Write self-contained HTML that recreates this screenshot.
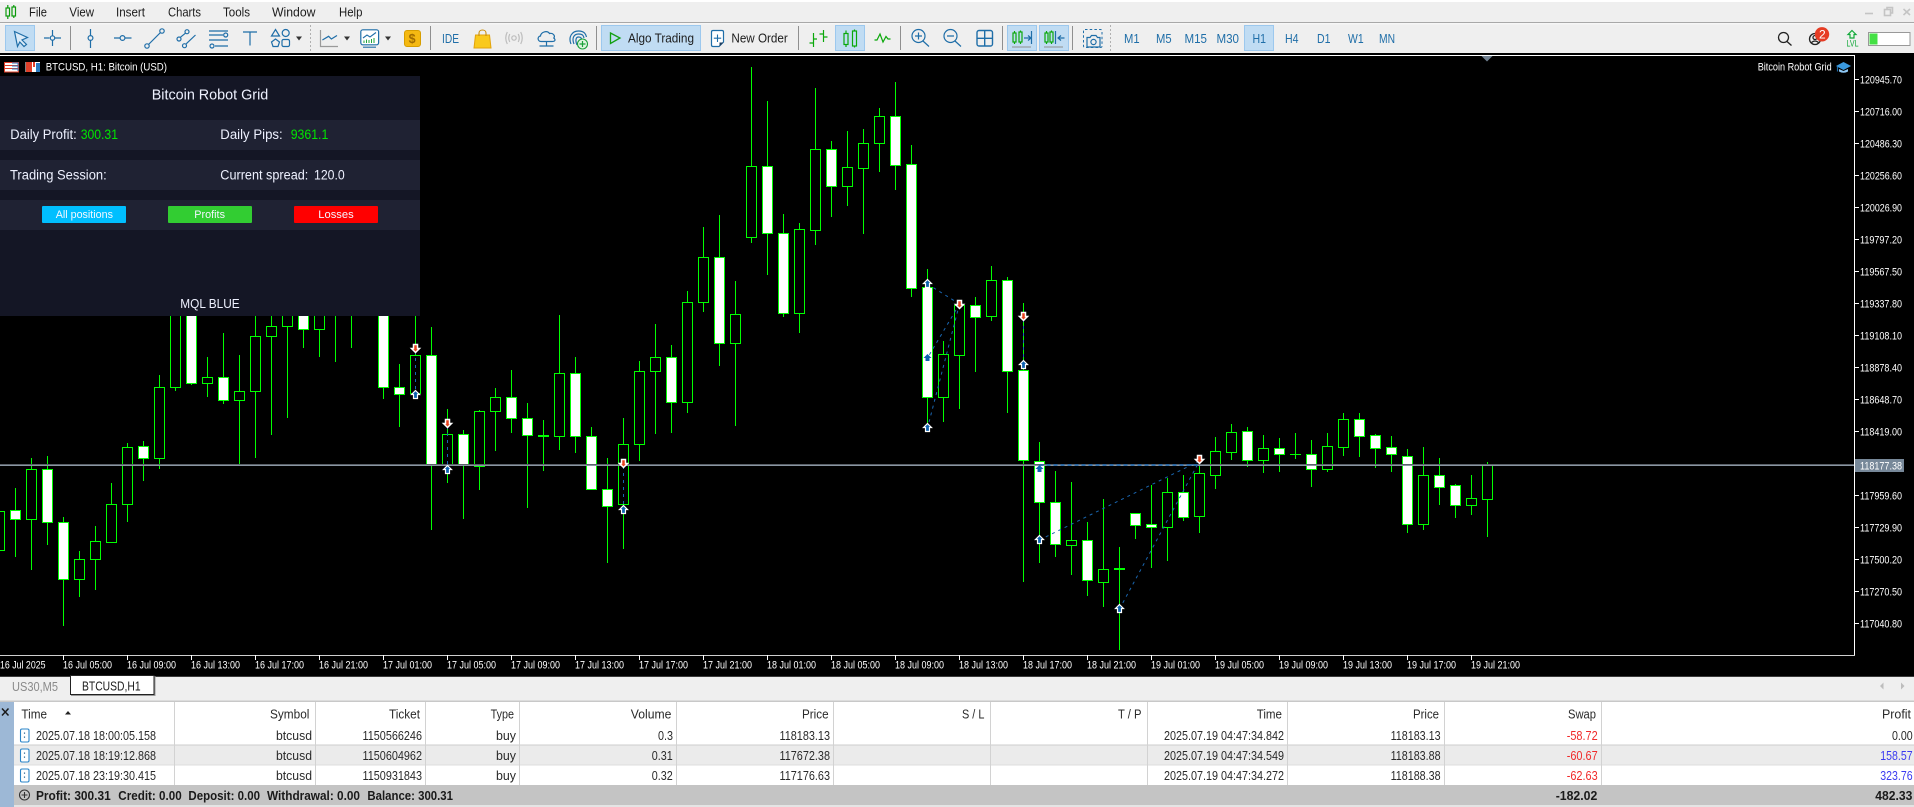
<!DOCTYPE html>
<html lang="en"><head><meta charset="utf-8"><title>BTCUSD,H1</title>
<style>
html,body{margin:0;padding:0;background:#000;width:1914px;height:807px;overflow:hidden}
svg{display:block;font-family:"Liberation Sans",Arial,sans-serif}
.w{stroke:#0f0;stroke-width:1;fill:none;shape-rendering:crispEdges}
.h rect{fill:#000;stroke:#0f0;shape-rendering:crispEdges}
.f rect{fill:#fff;stroke:#0f0;shape-rendering:crispEdges}
.ic{fill:none;stroke:#1f6ea8;stroke-width:1.2}
.gr{fill:none;stroke:#0aa80a;stroke-width:1.2}
.sep{stroke:#8f8f8f;stroke-width:1;shape-rendering:crispEdges}
.dash{stroke:#1a66b0;stroke-width:1;fill:none;stroke-dasharray:3 4}
.cs{stroke:#d2d2d2;stroke-width:1;shape-rendering:crispEdges}
</style></head><body>
<svg width="1914" height="807" viewBox="0 0 1914 807" xmlns="http://www.w3.org/2000/svg">
<defs>
<g id="up"><path d="M0-4.5 4-.5H2V3.5H-2V-.5H-4Z" fill="#0d62b0" stroke="#fff" stroke-width="1.2"/></g>
<g id="dn"><path d="M0 4.5 4 .5H2V-3.5H-2V.5H-4Z" fill="#e8431f" stroke="#fff" stroke-width="1.5"/></g>
<g id="upb"><path d="M0-4 4 0H2V3H-2V0H-4Z" fill="#0d62b0"/></g>
<g id="doc"><rect x="0.5" y="0.5" width="8.5" height="13" rx="1.5" fill="#fff" stroke="#2a84c8" stroke-width="1.1"/><path d="M4.5 4v1.3M4.5 8v1.3" stroke="#1f5f90" stroke-width="1.2"/></g>
</defs>

<!-- window chrome -->
<rect width="1914" height="53" fill="#efefef"/>
<rect width="1914" height="2" fill="#fff"/>
<rect y="22" width="1914" height="1.2" fill="#a8a8a8"/>
<rect y="23.2" width="1914" height="1" fill="#fff"/>
<!-- logo -->
<g fill="none" stroke="#0a9a0a" stroke-width="1.2"><rect x="6" y="8" width="3.5" height="8"/><path d="M7.8 5V8M7.8 16V19"/><rect x="12" y="7" width="3.5" height="9"/><path d="M13.8 5V7M13.8 16V18"/></g>
<!-- menu -->
<g font-size="13" fill="#1c1c1c">
<text x="29" y="16.5" textLength="18" lengthAdjust="spacingAndGlyphs">File</text>
<text x="69.4" y="16.5" textLength="24.6" lengthAdjust="spacingAndGlyphs">View</text>
<text x="116" y="16.5" textLength="29" lengthAdjust="spacingAndGlyphs">Insert</text>
<text x="168" y="16.5" textLength="33" lengthAdjust="spacingAndGlyphs">Charts</text>
<text x="223" y="16.5" textLength="27" lengthAdjust="spacingAndGlyphs">Tools</text>
<text x="272" y="16.5" textLength="43.5" lengthAdjust="spacingAndGlyphs">Window</text>
<text x="339" y="16.5" textLength="23.4" lengthAdjust="spacingAndGlyphs">Help</text>
</g>
<!-- window controls -->
<g fill="none" stroke="#c4c4c4" stroke-width="1.6"><path d="M1865 13.5H1873"/><rect x="1884.5" y="9.5" width="6" height="6"/><path d="M1887 9V7.5H1892.5V13H1891"/><path d="M1903.5 9 1910 15M1910 9 1903.5 15"/></g>

<!-- active toolbar buttons -->
<g fill="#c0dcf3" stroke="#9cc8ee" shape-rendering="crispEdges">
<rect x="5.5" y="25.5" width="29" height="25"/>
<rect x="601.5" y="25.5" width="99" height="25"/>
<rect x="835.5" y="25.5" width="29" height="25"/>
<rect x="1007.5" y="25.5" width="29" height="25"/>
<rect x="1039.5" y="25.5" width="29" height="25"/>
<rect x="1244.5" y="25.5" width="29" height="25"/>
</g>
<!-- separators -->
<g class="sep"><path d="M70.5 26V50M430.5 26V50M596.5 26V50M798.5 26V50M900.5 26V50M1002.5 26V50M1072.5 26V50"/></g>
<g stroke="#b0b0b0" stroke-dasharray="2 2"><path d="M310.5 25V51M1110.5 25V51"/></g>

<!-- drawing tools -->
<path d="M14.5 31.5 27.5 37.5 22 40 26.5 44.5 24 46.5 19.8 42 17.5 46.5Z" fill="#dcebf8" stroke="#1f6ea8" stroke-width="1.2"/>
<g class="ic">
<path d="M44 38H49.5M54.5 38H61M52.5 30V35.5M52.5 40.5V46"/><circle cx="52.5" cy="38" r="2.2"/>
<path d="M90.5 29V35.5M90.5 40.5V48"/><circle cx="90.5" cy="38" r="2.4"/>
<path d="M114 38H120M125 38H131.5"/><circle cx="122.5" cy="38" r="2.4"/>
<path d="M148.5 44.5 160.5 32.5"/><circle cx="147" cy="46" r="2.2"/><circle cx="162" cy="31" r="2.2"/>
<path d="M180.5 37.2 185.3 33.3M186.2 43.8 195.5 35"/><circle cx="187" cy="31.7" r="2"/><circle cx="179" cy="39" r="2"/><circle cx="184.5" cy="45.7" r="2"/>
<path d="M209 31H228M209 35H223M209 40H228M215 46H228M209 36"/><circle cx="225.7" cy="35" r="2"/><circle cx="212" cy="46" r="2"/>
<path d="M243 32H257M250 32V45.5"/>
<path d="M275.5 29.5 279.5 36H271.5Z"/><circle cx="285.7" cy="33" r="3.5"/><path d="M275.5 39 279.5 42 278 46.5H273L271.5 42Z"/><rect x="282" y="39.5" width="7.5" height="7" rx="1.5"/>
</g>
<g fill="#333"><path d="M296 36.5H302L299 40.5Z"/><path d="M344 36.5H350L347 40.5Z"/><path d="M385 36.5H391L388 40.5Z"/></g>
<path d="M320.5 30V46.5H338" fill="none" stroke="#9a9a9a" stroke-width="1.2"/>
<path d="M322.4 40 328.6 36.3 331.4 39 337 35.5" fill="none" stroke="#1f6ea8" stroke-width="1.2"/>
<rect x="360.8" y="29.8" width="17.8" height="15" rx="2" fill="#fff" stroke="#1f6ea8" stroke-width="1.2"/>
<path d="M363 38 367 35 370 37 376 32.5" fill="none" stroke="#1f6ea8" stroke-width="1.1"/>
<path d="M364 43V40.5M366.5 43V39.5M369 43V40M371.5 43V39M374 43V38" stroke="#1fa53a" stroke-width="1"/>
<path d="M363 47.2H376" stroke="#1f6ea8" stroke-width="1.1"/>
<rect x="404.5" y="30.5" width="16" height="16" rx="2.5" fill="#f5b912" stroke="#d79e00"/>
<text x="408.6" y="43" font-size="12.5" font-weight="bold" fill="#a06c00">$</text>
<text x="442" y="43" font-size="13" fill="#1f6ea8" textLength="17" lengthAdjust="spacingAndGlyphs">IDE</text>
<path d="M475.5 35H489.5L491 48H474Z" fill="#f9c91c" stroke="#e2a30c"/>
<path d="M479 36V33C479 29 486 29 486 33V36" fill="none" stroke="#c98e0a" stroke-width="1.1"/>
<g fill="none" stroke="#bdbdbd" stroke-width="1.2"><circle cx="514" cy="38" r="2.2"/><path d="M509.8 34Q507.7 38 509.8 42M518.2 34Q520.3 38 518.2 42M507.3 32Q504.2 38 507.3 44M520.7 32Q523.8 38 520.7 44"/></g>
<g class="ic"><path d="M541 41.5C537.5 41.5 537 36.5 540.5 36 541 32 547 30 549.5 33.5 553 32.5 555.5 36 553.8 38 556 40 555 41.5 552 41.5Z"/><path d="M546.5 41.5V46M539.5 46H553.5"/>
<path d="M571 44C568 37 572 31 578.5 31S586 35 586.5 37M574 44C571.5 38 574 34 578.5 34S583.5 36 584 38M577 45C575 40 576 37 578.5 37S581.5 38.5 582 40"/></g>
<circle cx="582.5" cy="44" r="5" fill="#dff5e0" stroke="#1aa13a" stroke-width="1.1"/><path d="M582.5 41V47M579.5 44H585.5" stroke="#1aa13a" stroke-width="1.2"/>

<path d="M610.5 33 620 38 610.5 43.5Z" fill="none" stroke="#12a012" stroke-width="1.3"/>
<text x="628" y="42.5" font-size="13" fill="#1c1c1c" textLength="66" lengthAdjust="spacingAndGlyphs">Algo Trading</text>
<path d="M713 30.5H722C723 30.5 723.5 31 723.5 32V42L719 46.5H713C712 46.5 711.5 46 711.5 45V32C711.5 31 712 30.5 713 30.5Z" fill="#fff" stroke="#1f6ea8" stroke-width="1.2"/>
<path d="M717.5 34.5V42M713.8 38.2H721.2" stroke="#1f6ea8" stroke-width="1.1"/><path d="M719.5 46.5V42.5H723.5Z" fill="#1f3f60"/>
<text x="731.4" y="42.5" font-size="13" fill="#1c1c1c" textLength="56.4" lengthAdjust="spacingAndGlyphs">New Order</text>
<g class="gr"><path d="M813.5 33V47M813.5 39H817M809.5 43H813.5M823.5 30V42M823.5 37H827.5M819.5 34H823.5"/>
<rect x="844" y="33.5" width="4" height="11"/><path d="M846 30.5V33.5M846 44.5V47"/><rect x="852.5" y="31" width="4" height="15"/><path d="M854.5 29.5V31M854.5 46V47.5"/>
<path d="M874.5 40H877L880 34 883 42 886 36.5 888 39H890.5"/></g>
<g class="ic">
<circle cx="918.5" cy="36" r="6.5"/><path d="M923 41 929 46.5M915 36H922M918.5 32.5V39.5"/>
<circle cx="950.5" cy="36" r="6.5"/><path d="M955 41 961 46.5M947 36H954"/>
<rect x="977" y="30.5" width="15.5" height="15.5" rx="2" stroke-width="1.4"/><path d="M984.7 30.5V46M977 38.3H992.5" stroke-width="1.4"/>
</g>
<g class="gr"><rect x="1013" y="33" width="3" height="9"/><path d="M1014.5 31V33M1014.5 42V44"/><rect x="1019" y="32" width="3" height="10"/><path d="M1020.5 30.5V32M1020.5 42V44"/><rect x="1045" y="33" width="3" height="9"/><path d="M1046.5 31V33M1046.5 42V44"/><rect x="1050" y="32" width="3" height="10"/><path d="M1051.5 30.5V32M1051.5 42V44"/></g>
<g class="ic"><path d="M1024 38H1030.5M1028 35.5 1031 38 1028 40.5M1031.5 31V44"/><path d="M1055.5 31V44M1058 38H1064.5M1061 35.5 1058 38 1061 40.5"/></g>
<path d="M1012 47H1031M1044 47H1063" stroke="#8f8f8f" stroke-width="1"/>
<rect x="1083.5" y="29.5" width="18.5" height="18" rx="1.5" fill="none" stroke="#1f6ea8" stroke-dasharray="2.5 2.2"/>
<path d="M1087 37.5H1090L1091.5 35.5H1096L1097.5 37.5H1100V47H1087Z" fill="#efefef" stroke="#1f6ea8" stroke-width="1.2"/><circle cx="1093.5" cy="42" r="2.6" fill="none" stroke="#1f6ea8" stroke-width="1.2"/>
<g font-size="13" fill="#1f6ea8">
<text x="1124" y="43" textLength="15.6" lengthAdjust="spacingAndGlyphs">M1</text>
<text x="1156" y="43" textLength="15.6" lengthAdjust="spacingAndGlyphs">M5</text>
<text x="1184.5" y="43" textLength="22.5" lengthAdjust="spacingAndGlyphs">M15</text>
<text x="1216.5" y="43" textLength="22.5" lengthAdjust="spacingAndGlyphs">M30</text>
<text x="1252.5" y="43" textLength="13.5" lengthAdjust="spacingAndGlyphs">H1</text>
<text x="1285" y="43" textLength="13.5" lengthAdjust="spacingAndGlyphs">H4</text>
<text x="1317" y="43" textLength="13.5" lengthAdjust="spacingAndGlyphs">D1</text>
<text x="1348" y="43" textLength="15.6" lengthAdjust="spacingAndGlyphs">W1</text>
<text x="1379" y="43" textLength="16" lengthAdjust="spacingAndGlyphs">MN</text>
</g>
<!-- right toolbar -->
<g fill="none" stroke="#222" stroke-width="1.3"><circle cx="1783.5" cy="37.5" r="5"/><path d="M1787 41.5 1791.5 45.5"/><circle cx="1815" cy="39" r="5.5"/><circle cx="1815" cy="37.5" r="2"/><path d="M1811.5 42.5Q1815 39.5 1818.5 42.5"/></g>
<circle cx="1822" cy="34.3" r="7.2" fill="#e63c24"/>
<text x="1819" y="38.6" font-size="12" fill="#fff">2</text>
<path d="M1852 30.5 1856 34.5H1854V38H1850V34.5H1848Z" fill="#e9f8ea" stroke="#12a83a" stroke-width="1.2"/>
<text x="1846.5" y="46.5" font-size="9" fill="#12a83a" textLength="12" lengthAdjust="spacingAndGlyphs">LVL</text>
<rect x="1868.5" y="32.5" width="41.5" height="13" fill="#fff" stroke="#999"/>
<rect x="1869.5" y="33.5" width="8" height="11" fill="#44e044"/>

<!-- chart -->
<rect y="53" width="1914" height="623" fill="#000"/>
<rect y="55" width="1854.5" height="1" fill="#fff"/>
<path d="M1481.5 56H1492.5L1487 61.5Z" fill="#6f7f8f"/>

<g class="w"><path d="M15.5 488V557M31.5 458V570M47.5 456V545M63.5 517V626M79.5 551V597M95.5 526V590M111.5 483V542M127.5 443V522M143.5 441V481M159.5 375V469M175.5 300V391M191.5 300V385M207.5 357V397M223.5 333V404M239.5 355V465M255.5 300V458M271.5 300V435M287.5 300V418M303.5 300V348M319.5 300V357M335.5 300V362M351.5 300V348M383.5 300V399M399.5 364V427M415.5 300V399M431.5 327V530M447.5 409V483M463.5 430V519M479.5 410V490M495.5 388V451M511.5 370V433M527.5 403V508M543.5 420V471M559.5 315V450M575.5 357V453M591.5 427V489M607.5 458V563M623.5 418V549M639.5 361V461M655.5 324V434M671.5 345V433M687.5 291V413M703.5 227V312M719.5 215V366M735.5 281V426M751.5 67V243M767.5 101V275M783.5 214V317M799.5 223V333M815.5 88V245M831.5 141V217M847.5 131V206M863.5 129V234M879.5 108V172M895.5 82V190M911.5 145V297M927.5 269V423M943.5 341V422M959.5 303V409M975.5 297V372M991.5 266V321M1007.5 277V413M1023.5 303V582M1039.5 442V563M1055.5 471V557M1071.5 482V575M1087.5 522V596M1103.5 499V607M1119.5 547V650M1135.5 513V539M1151.5 485V568M1167.5 478V561M1183.5 475V521M1199.5 463V533M1215.5 437V489M1231.5 424V460M1247.5 427V467M1263.5 435V473M1279.5 438V472M1295.5 433V459M1311.5 440V487M1327.5 433V472M1343.5 413V456M1359.5 413V457M1375.5 434V468M1391.5 436V472M1407.5 449V533M1423.5 447V530M1439.5 458V505M1455.5 484V518M1471.5 475V515M1487.5 462V537"/></g>

<g class="h">
<rect x="-5.5" y="511.5" width="10" height="39"/>
<rect x="26.5" y="469.5" width="10" height="50"/>
<rect x="74.5" y="559.5" width="10" height="20"/>
<rect x="90.5" y="541.5" width="10" height="18"/>
<rect x="106.5" y="504.5" width="10" height="38"/>
<rect x="122.5" y="447.5" width="10" height="57"/>
<rect x="154.5" y="387.5" width="10" height="71"/>
<rect x="170.5" y="300.5" width="10" height="87"/>
<rect x="202.5" y="377.5" width="10" height="6"/>
<rect x="234.5" y="391.5" width="10" height="9"/>
<rect x="250.5" y="336.5" width="10" height="55"/>
<rect x="266.5" y="326.5" width="10" height="10"/>
<rect x="282.5" y="300.5" width="10" height="26"/>
<rect x="314.5" y="300.5" width="10" height="29"/>
<rect x="410.5" y="355.5" width="10" height="38"/>
<rect x="442.5" y="434.5" width="10" height="31"/>
<rect x="474.5" y="411.5" width="10" height="55"/>
<rect x="490.5" y="397.5" width="10" height="14"/>
<rect x="554.5" y="373.5" width="10" height="63"/>
<rect x="618.5" y="444.5" width="10" height="60"/>
<rect x="634.5" y="371.5" width="10" height="73"/>
<rect x="650.5" y="357.5" width="10" height="14"/>
<rect x="682.5" y="302.5" width="10" height="100"/>
<rect x="698.5" y="257.5" width="10" height="45"/>
<rect x="730.5" y="314.5" width="10" height="29"/>
<rect x="746.5" y="166.5" width="10" height="71"/>
<rect x="794.5" y="229.5" width="10" height="84"/>
<rect x="810.5" y="149.5" width="10" height="81"/>
<rect x="842.5" y="167.5" width="10" height="19"/>
<rect x="858.5" y="143.5" width="10" height="25"/>
<rect x="874.5" y="116.5" width="10" height="27"/>
<rect x="938.5" y="354.5" width="10" height="43"/>
<rect x="954.5" y="305.5" width="10" height="50"/>
<rect x="986.5" y="280.5" width="10" height="36"/>
<rect x="1066.5" y="540.5" width="10" height="5"/>
<rect x="1098.5" y="569.5" width="10" height="13"/>
<rect x="1162.5" y="492.5" width="10" height="35"/>
<rect x="1194.5" y="473.5" width="10" height="43"/>
<rect x="1210.5" y="451.5" width="10" height="24"/>
<rect x="1226.5" y="432.5" width="10" height="20"/>
<rect x="1258.5" y="448.5" width="10" height="12"/>
<rect x="1322.5" y="446.5" width="10" height="23"/>
<rect x="1338.5" y="419.5" width="10" height="28"/>
<rect x="1418.5" y="475.5" width="10" height="49"/>
<rect x="1466.5" y="498.5" width="10" height="7"/>
<rect x="1482.5" y="465.5" width="10" height="34"/>
</g>
<g class="f">
<rect x="10.5" y="510.5" width="10" height="9"/>
<rect x="42.5" y="469.5" width="10" height="53"/>
<rect x="58.5" y="522.5" width="10" height="57"/>
<rect x="138.5" y="446.5" width="10" height="12"/>
<rect x="186.5" y="300.5" width="10" height="83"/>
<rect x="218.5" y="377.5" width="10" height="23"/>
<rect x="298.5" y="300.5" width="10" height="29"/>
<rect x="378.5" y="300.5" width="10" height="87"/>
<rect x="394.5" y="387.5" width="10" height="7"/>
<rect x="426.5" y="355.5" width="10" height="110"/>
<rect x="458.5" y="434.5" width="10" height="31"/>
<rect x="506.5" y="397.5" width="10" height="21"/>
<rect x="522.5" y="418.5" width="10" height="17"/>
<rect x="570.5" y="373.5" width="10" height="63"/>
<rect x="586.5" y="436.5" width="10" height="53"/>
<rect x="602.5" y="489.5" width="10" height="17"/>
<rect x="666.5" y="357.5" width="10" height="45"/>
<rect x="714.5" y="257.5" width="10" height="86"/>
<rect x="762.5" y="166.5" width="10" height="67"/>
<rect x="778.5" y="233.5" width="10" height="80"/>
<rect x="826.5" y="149.5" width="10" height="37"/>
<rect x="890.5" y="116.5" width="10" height="49"/>
<rect x="906.5" y="164.5" width="10" height="124"/>
<rect x="922.5" y="287.5" width="10" height="110"/>
<rect x="970.5" y="305.5" width="10" height="12"/>
<rect x="1002.5" y="280.5" width="10" height="91"/>
<rect x="1018.5" y="370.5" width="10" height="90"/>
<rect x="1034.5" y="461.5" width="10" height="41"/>
<rect x="1050.5" y="502.5" width="10" height="42"/>
<rect x="1082.5" y="540.5" width="10" height="40"/>
<rect x="1130.5" y="513.5" width="10" height="12"/>
<rect x="1146.5" y="524.5" width="10" height="3"/>
<rect x="1178.5" y="492.5" width="10" height="25"/>
<rect x="1242.5" y="431.5" width="10" height="29"/>
<rect x="1274.5" y="448.5" width="10" height="6"/>
<rect x="1306.5" y="454.5" width="10" height="15"/>
<rect x="1354.5" y="419.5" width="10" height="17"/>
<rect x="1370.5" y="435.5" width="10" height="13"/>
<rect x="1386.5" y="447.5" width="10" height="7"/>
<rect x="1402.5" y="456.5" width="10" height="68"/>
<rect x="1434.5" y="475.5" width="10" height="12"/>
<rect x="1450.5" y="485.5" width="10" height="20"/>
</g>
<g fill="#0f0" shape-rendering="crispEdges">
<rect x="538" y="435" width="11" height="2"/>
<rect x="1114" y="568" width="11" height="2"/>
<rect x="1290" y="454" width="11" height="1"/>
</g>

<!-- current price line -->
<rect y="464" width="1854" height="1" fill="#5a6068"/>
<rect y="465" width="1854" height="1" fill="#8a96a2"/>

<!-- trade lines -->
<g class="dash">
<path d="M415.5 351V392M447.5 426V467M623.5 466V507M1023.5 319V362"/>
<path d="M927.5 284 959.5 304M959.5 304 927.5 428M959.5 304 927.5 358M1039.5 540 1199.5 461M1119.5 609 1199.5 461"/>
<path d="M1039.5 465H1199.5" stroke-width="1.6" stroke-dasharray="4 3"/>
</g>
<!-- trade arrows -->
<use href="#dn" x="415.5" y="348"/><use href="#up" x="415.5" y="395"/>
<use href="#dn" x="447.5" y="423"/><use href="#up" x="447.5" y="470"/>
<use href="#dn" x="623.5" y="463"/><use href="#up" x="623.5" y="510"/>
<use href="#up" x="927.5" y="284"/><use href="#dn" x="959.5" y="304"/>
<use href="#dn" x="1023.5" y="316"/><use href="#up" x="1023.5" y="365"/>
<use href="#up" x="927.5" y="428"/><use href="#upb" x="927.5" y="358"/>
<use href="#upb" x="1039.5" y="469"/><use href="#dn" x="1199.5" y="459"/>
<use href="#up" x="1039.5" y="540"/><use href="#up" x="1119.5" y="609"/>

<!-- chart frame -->
<rect x="1854" y="55" width="1" height="601" fill="#fff"/>
<rect y="655" width="1855" height="1" fill="#cfcfcf"/>

<!-- price axis -->
<g stroke="#fff" shape-rendering="crispEdges"><path d="M1855 79.5H1859M1855 111.5H1859M1855 143.5H1859M1855 175.5H1859M1855 207.5H1859M1855 239.5H1859M1855 271.5H1859M1855 303.5H1859M1855 335.5H1859M1855 367.5H1859M1855 399.5H1859M1855 431.5H1859M1855 495.5H1859M1855 527.5H1859M1855 559.5H1859M1855 591.5H1859M1855 623.5H1859"/></g>
<g font-size="11" fill="#fff">
<text x="1860" y="83.3" textLength="42" lengthAdjust="spacingAndGlyphs">120945.70</text>
<text x="1860" y="115.3" textLength="42" lengthAdjust="spacingAndGlyphs">120716.00</text>
<text x="1860" y="147.3" textLength="42" lengthAdjust="spacingAndGlyphs">120486.30</text>
<text x="1860" y="179.3" textLength="42" lengthAdjust="spacingAndGlyphs">120256.60</text>
<text x="1860" y="211.3" textLength="42" lengthAdjust="spacingAndGlyphs">120026.90</text>
<text x="1860" y="243.3" textLength="42" lengthAdjust="spacingAndGlyphs">119797.20</text>
<text x="1860" y="275.3" textLength="42" lengthAdjust="spacingAndGlyphs">119567.50</text>
<text x="1860" y="307.3" textLength="42" lengthAdjust="spacingAndGlyphs">119337.80</text>
<text x="1860" y="339.3" textLength="42" lengthAdjust="spacingAndGlyphs">119108.10</text>
<text x="1860" y="371.3" textLength="42" lengthAdjust="spacingAndGlyphs">118878.40</text>
<text x="1860" y="403.3" textLength="42" lengthAdjust="spacingAndGlyphs">118648.70</text>
<text x="1860" y="435.3" textLength="42" lengthAdjust="spacingAndGlyphs">118419.00</text>
<text x="1860" y="499.3" textLength="42" lengthAdjust="spacingAndGlyphs">117959.60</text>
<text x="1860" y="531.3" textLength="42" lengthAdjust="spacingAndGlyphs">117729.90</text>
<text x="1860" y="563.3" textLength="42" lengthAdjust="spacingAndGlyphs">117500.20</text>
<text x="1860" y="595.3" textLength="42" lengthAdjust="spacingAndGlyphs">117270.50</text>
<text x="1860" y="627.3" textLength="42" lengthAdjust="spacingAndGlyphs">117040.80</text>
</g>
<rect x="1855" y="459" width="49" height="13" fill="#778899"/>
<text x="1860" y="469.3" font-size="11" fill="#fff" textLength="42" lengthAdjust="spacingAndGlyphs">118177.38</text>

<!-- time axis -->
<g stroke="#fff" shape-rendering="crispEdges"><path d="M63.5 655V660M127.5 655V660M191.5 655V660M255.5 655V660M319.5 655V660M383.5 655V660M447.5 655V660M511.5 655V660M575.5 655V660M639.5 655V660M703.5 655V660M767.5 655V660M831.5 655V660M895.5 655V660M959.5 655V660M1023.5 655V660M1087.5 655V660M1151.5 655V660M1215.5 655V660M1279.5 655V660M1343.5 655V660M1407.5 655V660M1471.5 655V660"/></g>
<g font-size="11" fill="#fff">
<text x="0" y="668.3" textLength="45.5" lengthAdjust="spacingAndGlyphs">16 Jul 2025</text>
<text x="63" y="668.3" textLength="49" lengthAdjust="spacingAndGlyphs">16 Jul 05:00</text>
<text x="127" y="668.3" textLength="49" lengthAdjust="spacingAndGlyphs">16 Jul 09:00</text>
<text x="191" y="668.3" textLength="49" lengthAdjust="spacingAndGlyphs">16 Jul 13:00</text>
<text x="255" y="668.3" textLength="49" lengthAdjust="spacingAndGlyphs">16 Jul 17:00</text>
<text x="319" y="668.3" textLength="49" lengthAdjust="spacingAndGlyphs">16 Jul 21:00</text>
<text x="383" y="668.3" textLength="49" lengthAdjust="spacingAndGlyphs">17 Jul 01:00</text>
<text x="447" y="668.3" textLength="49" lengthAdjust="spacingAndGlyphs">17 Jul 05:00</text>
<text x="511" y="668.3" textLength="49" lengthAdjust="spacingAndGlyphs">17 Jul 09:00</text>
<text x="575" y="668.3" textLength="49" lengthAdjust="spacingAndGlyphs">17 Jul 13:00</text>
<text x="639" y="668.3" textLength="49" lengthAdjust="spacingAndGlyphs">17 Jul 17:00</text>
<text x="703" y="668.3" textLength="49" lengthAdjust="spacingAndGlyphs">17 Jul 21:00</text>
<text x="767" y="668.3" textLength="49" lengthAdjust="spacingAndGlyphs">18 Jul 01:00</text>
<text x="831" y="668.3" textLength="49" lengthAdjust="spacingAndGlyphs">18 Jul 05:00</text>
<text x="895" y="668.3" textLength="49" lengthAdjust="spacingAndGlyphs">18 Jul 09:00</text>
<text x="959" y="668.3" textLength="49" lengthAdjust="spacingAndGlyphs">18 Jul 13:00</text>
<text x="1023" y="668.3" textLength="49" lengthAdjust="spacingAndGlyphs">18 Jul 17:00</text>
<text x="1087" y="668.3" textLength="49" lengthAdjust="spacingAndGlyphs">18 Jul 21:00</text>
<text x="1151" y="668.3" textLength="49" lengthAdjust="spacingAndGlyphs">19 Jul 01:00</text>
<text x="1215" y="668.3" textLength="49" lengthAdjust="spacingAndGlyphs">19 Jul 05:00</text>
<text x="1279" y="668.3" textLength="49" lengthAdjust="spacingAndGlyphs">19 Jul 09:00</text>
<text x="1343" y="668.3" textLength="49" lengthAdjust="spacingAndGlyphs">19 Jul 13:00</text>
<text x="1407" y="668.3" textLength="49" lengthAdjust="spacingAndGlyphs">19 Jul 17:00</text>
<text x="1471" y="668.3" textLength="49" lengthAdjust="spacingAndGlyphs">19 Jul 21:00</text>
</g>

<!-- chart header -->
<rect x="4.5" y="62.5" width="14" height="9.5" fill="#fff" stroke="#e0402a"/>
<path d="M5 65.5H18M5 68.5H18" stroke="#e0402a"/><path d="M12 63H18V65M12 66H18V68M12 69H18V71" stroke="#2a7ac0" fill="none"/>
<path d="M25.5 62H40V72H25.5Z" fill="#fff"/><path d="M26 62H32V72H26ZM33 62H35V67H33Z" fill="#e0402a"/><path d="M36 63H40V72H36Z" fill="#2a7ac0"/>
<text x="45.7" y="70.5" font-size="11" fill="#fff" textLength="121.3" lengthAdjust="spacingAndGlyphs">BTCUSD, H1:  Bitcoin (USD)</text>
<text x="1757.7" y="70.5" font-size="11" fill="#fff" textLength="74" lengthAdjust="spacingAndGlyphs">Bitcoin Robot Grid</text>
<path d="M1843.5 62 1851 66 1843.5 70 1836 66Z" fill="#3a9ae0"/><path d="M1839 69V71.5Q1843.5 74 1848 71.5V69L1843.5 71Z" fill="#8ec8f4"/><path d="M1837.5 66.5V71.5" stroke="#1f6ea8" stroke-width="1.2"/>

<!-- EA panel -->
<rect y="76" width="420" height="240" fill="#141625"/>
<g fill="#1f2233"><rect y="120" width="420" height="30"/><rect y="160" width="420" height="30"/><rect y="200" width="420" height="30"/></g>
<g fill="#eef1ff">
<text x="151.7" y="99.5" font-size="15" textLength="116.6" lengthAdjust="spacingAndGlyphs">Bitcoin Robot Grid</text>
<g font-size="13.5">
<text x="10.3" y="139" textLength="66.4" lengthAdjust="spacingAndGlyphs">Daily Profit:</text>
<text x="220.3" y="139" textLength="62.4" lengthAdjust="spacingAndGlyphs">Daily Pips:</text>
<text x="10" y="179.5" textLength="96.7" lengthAdjust="spacingAndGlyphs">Trading Session:</text>
<text x="220.3" y="179.5" textLength="88" lengthAdjust="spacingAndGlyphs">Current spread:</text>
<text x="314" y="179.5" textLength="30.7" lengthAdjust="spacingAndGlyphs">120.0</text>
</g>
<g font-size="13.5" fill="#00e600">
<text x="80.7" y="139" textLength="37.3" lengthAdjust="spacingAndGlyphs">300.31</text>
<text x="290.7" y="139" textLength="37.6" lengthAdjust="spacingAndGlyphs">9361.1</text>
</g>
</g>
<rect x="42" y="206" width="84" height="17" rx="1" fill="#00bfff"/>
<rect x="168" y="206" width="84" height="17" rx="1" fill="#32cd32"/>
<rect x="294" y="206" width="84" height="17" rx="1" fill="#ff0000"/>
<g font-size="11" fill="#f4f7ff">
<text x="55.7" y="218" textLength="57.3" lengthAdjust="spacingAndGlyphs">All positions</text>
<text x="194.3" y="218" textLength="30.7" lengthAdjust="spacingAndGlyphs">Profits</text>
<text x="318.3" y="218" textLength="35.4" lengthAdjust="spacingAndGlyphs">Losses</text>
</g>
<text x="180.3" y="308" font-size="13" fill="#eef1ff" textLength="59.4" lengthAdjust="spacingAndGlyphs">MQL BLUE</text>

<!-- tabs bar -->
<rect y="676" width="1914" height="131" fill="#efefef"/>
<rect y="676" width="1914" height="1" fill="#3a3a3a"/>
<rect x="70.5" y="675.5" width="83.5" height="19" fill="#fff" stroke="#222"/>
<path d="M71 695.5H155V676" fill="none" stroke="#999"/>
<text x="82" y="690.5" font-size="13" fill="#1c1c1c" textLength="58.6" lengthAdjust="spacingAndGlyphs">BTCUSD,H1</text>
<text x="12" y="691" font-size="13" fill="#8a8a8a" textLength="46" lengthAdjust="spacingAndGlyphs">US30,M5</text>
<path d="M1883.5 682.5V689.5L1880 686ZM1901 682.5V689.5L1904.5 686Z" fill="#bdbdbd"/>
<rect y="700.5" width="1914" height="1.5" fill="#c8c8c8"/>

<!-- table -->
<rect y="702" width="1914" height="105" fill="#fff"/>
<rect x="0" y="702" width="14" height="105" fill="#9db8d6"/>
<path d="M2 708.5 8.5 715.5M8.5 708.5 2 715.5" stroke="#1a1a1a" stroke-width="1.5"/>
<rect x="14" y="745" width="1900" height="20" fill="#ebebeb"/>
<rect x="14" y="744.5" width="1900" height="1" fill="#cdcdcd"/>
<rect x="14" y="764.5" width="1900" height="1" fill="#dcdcdc"/>
<g class="cs"><path d="M174.5 702V785M315.5 702V785M425.5 702V785M519.5 702V785M676.5 702V785M833.5 702V785M990.5 702V785M1147.5 702V785M1287.5 702V785M1444.5 702V785M1601.5 702V785"/></g>
<rect x="14" y="785" width="1900" height="20" fill="#c4c4c4"/>
<rect x="14" y="805" width="1900" height="2" fill="#e4e4e4"/>
<path d="M65 714.5H71L68 711Z" fill="#222"/>

<g font-size="13" fill="#2a2a2a">
<text x="21.4" y="718.5" textLength="25.6" lengthAdjust="spacingAndGlyphs">Time</text>
<text x="270" y="718.5" textLength="39.4" lengthAdjust="spacingAndGlyphs">Symbol</text>
<text x="389" y="718.5" textLength="31" lengthAdjust="spacingAndGlyphs">Ticket</text>
<text x="490.6" y="718.5" textLength="23.4" lengthAdjust="spacingAndGlyphs">Type</text>
<text x="630.8" y="718.5" textLength="40.6" lengthAdjust="spacingAndGlyphs">Volume</text>
<text x="802" y="718.5" textLength="26.6" lengthAdjust="spacingAndGlyphs">Price</text>
<text x="962" y="718.5" textLength="22.4" lengthAdjust="spacingAndGlyphs">S / L</text>
<text x="1118" y="718.5" textLength="23.5" lengthAdjust="spacingAndGlyphs">T / P</text>
<text x="1256.7" y="718.5" textLength="25.3" lengthAdjust="spacingAndGlyphs">Time</text>
<text x="1413" y="718.5" textLength="26" lengthAdjust="spacingAndGlyphs">Price</text>
<text x="1568" y="718.5" textLength="28" lengthAdjust="spacingAndGlyphs">Swap</text>
<text x="1882" y="718.5" textLength="29" lengthAdjust="spacingAndGlyphs">Profit</text>

<text x="36" y="740" textLength="120" lengthAdjust="spacingAndGlyphs">2025.07.18 18:00:05.158</text>
<text x="276" y="740" textLength="36" lengthAdjust="spacingAndGlyphs">btcusd</text>
<text x="362.5" y="740" textLength="59.5" lengthAdjust="spacingAndGlyphs">1150566246</text>
<text x="496" y="740" textLength="20" lengthAdjust="spacingAndGlyphs">buy</text>
<text x="658" y="740" textLength="15" lengthAdjust="spacingAndGlyphs">0.3</text>
<text x="779.5" y="740" textLength="50.5" lengthAdjust="spacingAndGlyphs">118183.13</text>
<text x="1164" y="740" textLength="120" lengthAdjust="spacingAndGlyphs">2025.07.19 04:47:34.842</text>
<text x="1390.6" y="740" textLength="50" lengthAdjust="spacingAndGlyphs">118183.13</text>
<text x="1892" y="740" textLength="20.7" lengthAdjust="spacingAndGlyphs">0.00</text>

<text x="36" y="760" textLength="120" lengthAdjust="spacingAndGlyphs">2025.07.18 18:19:12.868</text>
<text x="276" y="760" textLength="36" lengthAdjust="spacingAndGlyphs">btcusd</text>
<text x="362.5" y="760" textLength="59.5" lengthAdjust="spacingAndGlyphs">1150604962</text>
<text x="496" y="760" textLength="20" lengthAdjust="spacingAndGlyphs">buy</text>
<text x="651.8" y="760" textLength="21" lengthAdjust="spacingAndGlyphs">0.31</text>
<text x="779.5" y="760" textLength="50.5" lengthAdjust="spacingAndGlyphs">117672.38</text>
<text x="1164" y="760" textLength="120" lengthAdjust="spacingAndGlyphs">2025.07.19 04:47:34.549</text>
<text x="1390.6" y="760" textLength="50" lengthAdjust="spacingAndGlyphs">118183.88</text>

<text x="36" y="780" textLength="120" lengthAdjust="spacingAndGlyphs">2025.07.18 23:19:30.415</text>
<text x="276" y="780" textLength="36" lengthAdjust="spacingAndGlyphs">btcusd</text>
<text x="362.5" y="780" textLength="59.5" lengthAdjust="spacingAndGlyphs">1150931843</text>
<text x="496" y="780" textLength="20" lengthAdjust="spacingAndGlyphs">buy</text>
<text x="651.8" y="780" textLength="21" lengthAdjust="spacingAndGlyphs">0.32</text>
<text x="779.5" y="780" textLength="50.5" lengthAdjust="spacingAndGlyphs">117176.63</text>
<text x="1164" y="780" textLength="120" lengthAdjust="spacingAndGlyphs">2025.07.19 04:47:34.272</text>
<text x="1390.6" y="780" textLength="50" lengthAdjust="spacingAndGlyphs">118188.38</text>
</g>
<g font-size="13" fill="#f02a2a">
<text x="1566.7" y="740" textLength="31" lengthAdjust="spacingAndGlyphs">-58.72</text>
<text x="1566.7" y="760" textLength="31" lengthAdjust="spacingAndGlyphs">-60.67</text>
<text x="1566.7" y="780" textLength="31" lengthAdjust="spacingAndGlyphs">-62.63</text>
</g>
<g font-size="13" fill="#3a3af0">
<text x="1880.3" y="760" textLength="32.3" lengthAdjust="spacingAndGlyphs">158.57</text>
<text x="1880.3" y="780" textLength="32.3" lengthAdjust="spacingAndGlyphs">323.76</text>
</g>
<use href="#doc" x="20" y="728.5"/><use href="#doc" x="20" y="748.5"/><use href="#doc" x="20" y="768.5"/>

<circle cx="24.5" cy="795" r="5" fill="none" stroke="#333" stroke-width="1.1"/>
<path d="M24.5 792V798M21.5 795H27.5" stroke="#333" stroke-width="1.1"/>
<g font-size="13" font-weight="bold" fill="#1a1a1a">
<text x="36" y="800" textLength="74.7" lengthAdjust="spacingAndGlyphs">Profit: 300.31</text>
<text x="118.3" y="800" textLength="63.4" lengthAdjust="spacingAndGlyphs">Credit: 0.00</text>
<text x="188.4" y="800" textLength="71.6" lengthAdjust="spacingAndGlyphs">Deposit: 0.00</text>
<text x="267" y="800" textLength="93" lengthAdjust="spacingAndGlyphs">Withdrawal: 0.00</text>
<text x="367.4" y="800" textLength="85.6" lengthAdjust="spacingAndGlyphs">Balance: 300.31</text>
<text x="1555.7" y="800" textLength="41.6" lengthAdjust="spacingAndGlyphs">-182.02</text>
<text x="1875.3" y="800" textLength="37" lengthAdjust="spacingAndGlyphs">482.33</text>
</g>
</svg>
</body></html>
